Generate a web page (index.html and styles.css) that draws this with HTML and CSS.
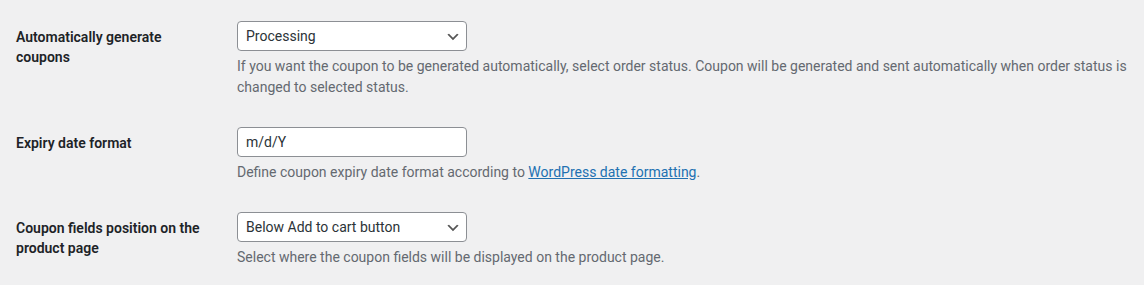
FILE: index.html
```html
<!DOCTYPE html>
<html lang="en">
<head>
<meta charset="utf-8">
<title>Coupon settings</title>
<link rel="stylesheet" href="styles.css">
</head>
<body>
<table class="form-table">
  <tbody>
    <tr>
      <th class="label-cell"><label for="auto-gen">Automatically generate coupons</label></th>
      <td class="field-cell">
        <select id="auto-gen" class="field-select">
          <option>Processing</option>
        </select>
        <p class="description">If you want the coupon to be generated automatically, select order status. Coupon will be generated and sent automatically when order status is changed to selected status.</p>
      </td>
    </tr>
    <tr>
      <th class="label-cell"><label for="expiry">Expiry date format</label></th>
      <td class="field-cell">
        <input id="expiry" class="field-input" type="text" value="m/d/Y">
        <p class="description">Define coupon expiry date format according to <a class="desc-link" href="#">WordPress date formatting</a>.</p>
      </td>
    </tr>
    <tr>
      <th class="label-cell"><label for="position">Coupon fields position on the product page</label></th>
      <td class="field-cell">
        <select id="position" class="field-select">
          <option>Below Add to cart button</option>
        </select>
        <p class="description">Select where the coupon fields will be displayed on the product page.</p>
      </td>
    </tr>
  </tbody>
</table>
</body>
</html>
```
FILE: styles.css
```css
html, body {
  margin: 0;
  padding: 0;
  background: #f0f0f1;
}

body {
  font-family: Roboto, "Liberation Sans", sans-serif;
  font-size: 14px;
  color: #3c434a;
}

.form-table {
  border-collapse: collapse;
  margin: 6px 0 0 16px;
  width: calc(100% - 16px);
}

.label-cell {
  width: 200px;
  padding: 21px 10px 19px 0;
  text-align: left;
  vertical-align: top;
  font-weight: 600;
  font-size: 14px;
  line-height: 20px;
  color: #1d2327;
}

.field-cell {
  padding: 15px 10px 14px 11px;
  vertical-align: top;
  line-height: 1.5;
  font-size: 14px;
}

.field-select,
.field-input {
  display: block;
  box-sizing: border-box;
  width: 230px;
  height: 30px;
  margin: 0;
  border: 1px solid #8c8f94;
  border-radius: 4px;
  background-color: #fff;
  color: #2c3338;
  font-family: inherit;
  font-size: 14px;
  line-height: 28px;
}

.field-select {
  -webkit-appearance: none;
  appearance: none;
  padding: 0 24px 0 8px;
  background-image: url("data:image/svg+xml;charset=US-ASCII,%3Csvg%20width%3D%2220%22%20height%3D%2220%22%20xmlns%3D%22http%3A%2F%2Fwww.w3.org%2F2000%2Fsvg%22%3E%3Cpath%20d%3D%22M5%206l5%205%205-5%202%201-7%207-7-7%202-1z%22%20fill%3D%22%23555%22%2F%3E%3C%2Fsvg%3E");
  background-repeat: no-repeat;
  background-size: 16px 16px;
  background-position: right 5px top 55%;
}

.field-input {
  padding: 0 8px;
}

.description {
  margin: 5px 0 0;
  color: #646970;
  font-size: 14px;
  line-height: 21px;
}

.desc-link {
  color: #2271b1;
  text-decoration: underline;
}
```
